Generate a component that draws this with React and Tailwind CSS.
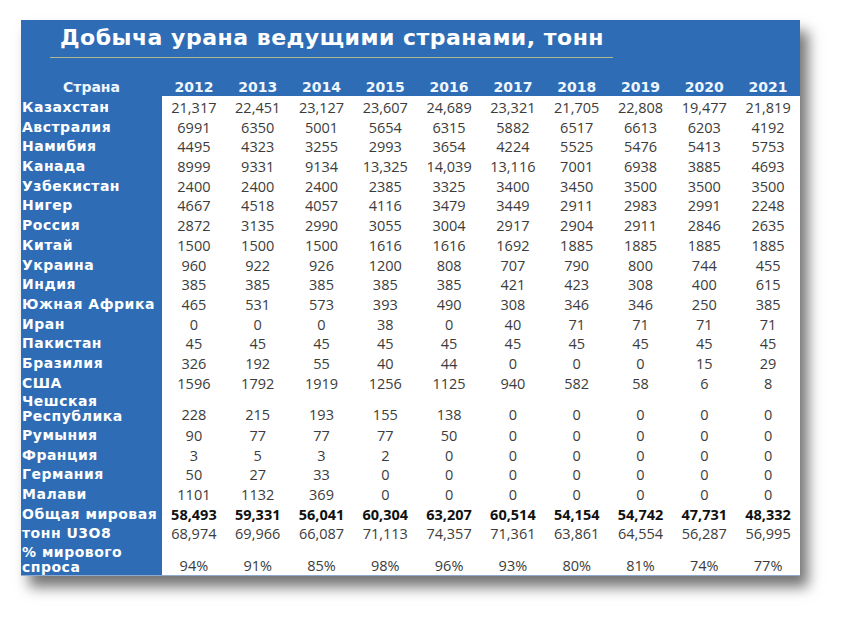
import React from "react";

const rows = [
  ["Казахстан", ["21,317", "22,451", "23,127", "23,607", "24,689", "23,321", "21,705", "22,808", "19,477", "21,819"]],
  ["Австралия", ["6991", "6350", "5001", "5654", "6315", "5882", "6517", "6613", "6203", "4192"]],
  ["Намибия", ["4495", "4323", "3255", "2993", "3654", "4224", "5525", "5476", "5413", "5753"]],
  ["Канада", ["8999", "9331", "9134", "13,325", "14,039", "13,116", "7001", "6938", "3885", "4693"]],
  ["Узбекистан", ["2400", "2400", "2400", "2385", "3325", "3400", "3450", "3500", "3500", "3500"]],
  ["Нигер", ["4667", "4518", "4057", "4116", "3479", "3449", "2911", "2983", "2991", "2248"]],
  ["Россия", ["2872", "3135", "2990", "3055", "3004", "2917", "2904", "2911", "2846", "2635"]],
  ["Китай", ["1500", "1500", "1500", "1616", "1616", "1692", "1885", "1885", "1885", "1885"]],
  ["Украина", ["960", "922", "926", "1200", "808", "707", "790", "800", "744", "455"]],
  ["Индия", ["385", "385", "385", "385", "385", "421", "423", "308", "400", "615"]],
  ["Южная Африка", ["465", "531", "573", "393", "490", "308", "346", "346", "250", "385"]],
  ["Иран", ["0", "0", "0", "38", "0", "40", "71", "71", "71", "71"]],
  ["Пакистан", ["45", "45", "45", "45", "45", "45", "45", "45", "45", "45"]],
  ["Бразилия", ["326", "192", "55", "40", "44", "0", "0", "0", "15", "29"]],
  ["США", ["1596", "1792", "1919", "1256", "1125", "940", "582", "58", "6", "8"]],
  [["Чешская", "Республика"], ["228", "215", "193", "155", "138", "0", "0", "0", "0", "0"]],
  ["Румыния", ["90", "77", "77", "77", "50", "0", "0", "0", "0", "0"]],
  ["Франция", ["3", "5", "3", "2", "0", "0", "0", "0", "0", "0"]],
  ["Германия", ["50", "27", "33", "0", "0", "0", "0", "0", "0", "0"]],
  ["Малави", ["1101", "1132", "369", "0", "0", "0", "0", "0", "0", "0"]],
  ["Общая мировая", ["58,493", "59,331", "56,041", "60,304", "63,207", "60,514", "54,154", "54,742", "47,731", "48,332"], true],
  ["тонн U3O8", ["68,974", "69,966", "66,087", "71,113", "74,357", "71,361", "63,861", "64,554", "56,287", "56,995"]],
  [["% мирового", "спроса"], ["94%", "91%", "85%", "98%", "96%", "93%", "80%", "81%", "74%", "77%"]],
];

const years = ["2012", "2013", "2014", "2015", "2016", "2017", "2018", "2019", "2020", "2021"];

const wide = { fontFamily: '"DejaVu Sans", "Liberation Sans", sans-serif' };
const num = { fontFamily: '"Open Sans", "Liberation Sans", sans-serif' };

function Row({ label, values, bold }) {
  const two = Array.isArray(label);
  return (
    <div
      className={
        "grid grid-cols-[141px_repeat(10,minmax(0,1fr))] " +
        (two ? "h-[32.6px]" : "h-[19.7px]")
      }
    >
      <div
        className={
          "flex pl-[1px] text-white font-bold text-[14px] tracking-[0.5px] whitespace-nowrap " +
          (two ? "flex-col justify-end leading-[15px] pb-[0px]" : "items-center leading-[19px] pt-[2px]")
        }
        style={wide}
      >
        {two ? (
          <>
            <span>{label[0]}</span>
            <span>{label[1]}</span>
          </>
        ) : (
          label
        )}
      </div>
      {values.map((v, i) => (
        <div
          key={i}
          className={
            "bg-white flex justify-center text-[14.5px] leading-[19px] " +
            (two ? "items-end " : "items-center pt-[2px] ") +
            (bold ? "font-bold text-[#111111]" : "text-[#3c3c3c]")
          }
          style={num}
        >
          {v}
        </div>
      ))}
    </div>
  );
}

export default function App() {
  return (
    <div className="w-[842px] h-[618px] bg-white overflow-hidden">
      <div className="ml-[21px] mt-[20px] w-[779px] bg-[#2e6db5] shadow-[8px_11px_13px_rgba(0,0,0,0.55)] flex flex-col">
        <div
          className="pt-[4px] pl-[39px] h-[31px] text-white font-bold text-[22px] leading-[27px] tracking-[0.5px] whitespace-nowrap"
          style={wide}
        >
          Добыча урана ведущими странами, тонн
        </div>
        <div className="ml-[29px] mt-[6px] w-[563px] h-[1px] bg-[#b3b98f]" />
        <div className="mt-[19px] h-[19px] grid grid-cols-[141px_repeat(10,minmax(0,1fr))] items-center text-[14px] leading-[19px] font-bold text-[#eef6ff] pt-[1px]" style={wide}>
          <div className="text-center">Страна</div>
          {years.map((y) => (
            <div key={y} className="text-center">
              {y}
            </div>
          ))}
        </div>
        <div className="flex flex-col border-b border-[#8eaad0]">
          {rows.map((r, i) => (
            <Row key={i} label={r[0]} values={r[1]} bold={r[2]} />
          ))}
        </div>
      </div>
    </div>
  );
}
